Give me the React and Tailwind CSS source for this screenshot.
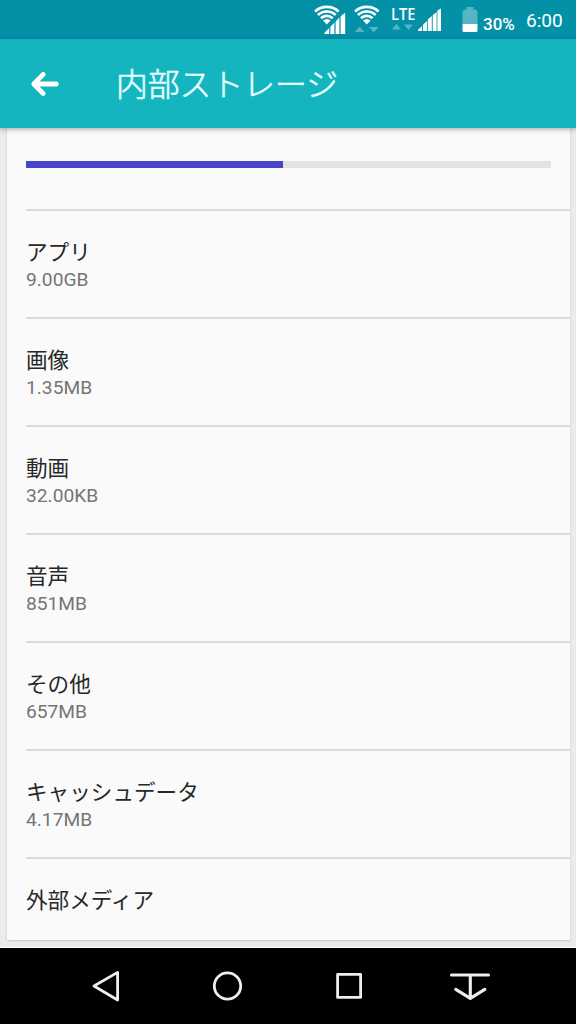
import React from "react";

const rows = [
  { label: "アプリ", size: "9.00GB" },
  { label: "画像", size: "1.35MB" },
  { label: "動画", size: "32.00KB" },
  { label: "音声", size: "851MB" },
  { label: "その他", size: "657MB" },
  { label: "キャッシュデータ", size: "4.17MB" },
];

function Wifi({ className, children }) {
  return (
    <svg className={className} viewBox="0 0 32 32" fill="none" stroke="#fff" strokeWidth="2.7">
      <path d="M1 8.6A17.2 17.2 0 0 1 24.6 8.6" />
      <path d="M4 12A12.8 12.8 0 0 1 21.6 12" />
      <path d="M7 15.2A8.4 8.4 0 0 1 18.6 15.2" />
      <path d="M9 17.6Q12.8 14.6 16.6 17.6L12.8 21.4Z" fill="#fff" stroke="none" />
      {children}
    </svg>
  );
}

function StatusBar() {
  return (
    <div className="flex h-[39px] shrink-0 items-start bg-[#0391a8] pl-[314px] text-white">
      <Wifi className="mt-[3px] size-8 shrink-0">
        <path d="M12 25 32 5V31.5H12Z" fill="#0391a8" stroke="none" />
        <path
          d="M10.5 31V29.8L15.2 25V31ZM16.4 31V23.8L20.4 19.6V31ZM21.6 31V18.4L25.4 14.4V31ZM26.6 31V13.2L31.2 9.8V31Z"
          fill="#fff"
          stroke="none"
        />
      </Wifi>
      <Wifi className="ml-[8px] mt-[3px] size-8 shrink-0">
        <path d="M.8 29 5.6 23.6 10.4 29ZM14.8 24H24.6L19.7 29.4Z" fill="#55b5c4" stroke="none" />
      </Wifi>
      <div className="ml-[5px] mt-[5px] flex w-[24px] shrink-0 flex-col">
        <span className="h-[18px] w-[28px] origin-left scale-x-[0.86] whitespace-nowrap font-[Open_Sans,sans-serif] text-[17px] font-semibold leading-[18px]">
          LTE
        </span>
        <svg className="h-[8px] w-[24px]" viewBox="0 0 24 8" fill="#55b5c4">
          <path d="M1 6.5 5.5 1 10 6.5ZM13 1.5H22L17.5 7Z" />
        </svg>
      </div>
      <svg className="ml-[3px] mt-[7px] h-[25px] w-[24px] shrink-0" viewBox="0 0 24 25" fill="#fff">
        <path d="M0 24V22.8L4.1 19V24ZM5 24V17.8L8.9 14V24ZM9.8 24V12.6L13.8 9V24ZM14.7 24V8.2L18.6 5V24ZM19.4 24V3.6L23 1.5V24Z" />
      </svg>
      <svg className="ml-[20px] mt-[7px] h-[25px] w-[16px] shrink-0" viewBox="0 0 16 25">
        <path d="M4.5 0H11.5V2.5H13.5Q15.5 3 15.5 5V17.5H.5V5Q.5 3 2.5 2.5H4.5Z" fill="#55b5c4" />
        <path d="M.5 17H15.5V23.5Q15.5 25 14 25H2Q.5 25 .5 23.5Z" fill="#fff" />
      </svg>
      <span className="ml-[5px] mt-[14px] w-[32px] shrink-0 font-[Roboto,sans-serif] text-[17px] font-medium leading-[20px]">
        30%
      </span>
      <span className="ml-[11px] mt-[10px] font-[Roboto,sans-serif] text-[19px] leading-[21px]">6:00</span>
    </div>
  );
}

function NavBar() {
  return (
    <nav className="flex h-[76px] shrink-0 items-start bg-black pl-[92px] pt-[22px]">
      <svg className="h-[34px] w-[28px]" viewBox="0 0 28 34" fill="none" stroke="#eee" strokeWidth="2.8" strokeLinejoin="round">
        <path d="M25.6 2.4V30L2 16Z" />
      </svg>
      <svg className="ml-[92px] size-[32px]" viewBox="0 0 32 32" fill="none" stroke="#eee" strokeWidth="2.8">
        <circle cx="15.5" cy="16" r="13.2" />
      </svg>
      <svg className="ml-[91px] mt-[2px] size-[28px]" viewBox="0 0 28 28" fill="none" stroke="#eee" strokeWidth="2.8" strokeLinejoin="round">
        <rect x="2.6" y="2.4" width="23" height="23" />
      </svg>
      <svg className="ml-[86px] h-[32px] w-[42px]" viewBox="0 0 42 32" fill="none" stroke="#eee" strokeWidth="3.1" strokeLinecap="round" strokeLinejoin="round">
        <path d="M2.5 5H39.5M21.3 5V28.4M6.8 19.4 21.3 28.4 35.8 19.4" />
      </svg>
    </nav>
  );
}

export default function App() {
  return (
    <div className="flex h-[1024px] w-[576px] flex-col overflow-hidden bg-[#ebebeb] font-[Roboto,Noto_Sans_CJK_JP,sans-serif]" lang="ja">
      <StatusBar />
      <header className="z-10 flex h-[89px] shrink-0 items-center bg-[#15b5c0] pl-[30px] text-white shadow-[0_1px_5px_rgba(0,0,0,0.35)]">
        <svg className="size-[30px]" viewBox="0 0 30 30" fill="none" stroke="#fff" strokeWidth="4.8" strokeLinecap="round" strokeLinejoin="round">
          <path d="M13.2 5.4 3.8 15 13.2 24.6M4 15H26.3" />
        </svg>
        <h1 className="mb-[3px] ml-[56px] font-[Noto_Sans_CJK_JP,sans-serif] text-[31.8px] font-light leading-[40px] text-[#e6ffff] [-webkit-text-stroke:0.6px_#e6ffff]">
          内部ストレージ
        </h1>
      </header>
      <main className="flex h-[820px] shrink-0 flex-col border-b border-white pl-[7px] pr-[6px]">
        <section className="flex h-[812px] flex-col bg-[#fafafa] pl-[19px] shadow-[0_1px_2px_rgba(0,0,0,0.16)]">
          <div className="h-[81px] shrink-0 pr-[19px] pt-[33px]">
            <div className="h-[7px] bg-[#e2e2e2]">
              <div className="h-full w-[257px] bg-[#4845c8]" />
            </div>
          </div>
          {rows.map((row) => (
            <div key={row.label} className="h-[108px] shrink-0 border-t-2 border-[#dcdcdc] pt-[26px]">
              <div className="font-[Noto_Sans_CJK_JP,sans-serif] text-[21.6px] leading-[28px] text-[#282828]">{row.label}</div>
              <div className="text-[19.2px] leading-[30px] text-[#757575]">{row.size}</div>
            </div>
          ))}
          <div className="border-t-2 border-[#dcdcdc] pt-[26px]">
            <div className="font-[Noto_Sans_CJK_JP,sans-serif] text-[21.6px] leading-[28px] text-[#282828]">外部メディア</div>
          </div>
        </section>
      </main>
      <NavBar />
    </div>
  );
}
